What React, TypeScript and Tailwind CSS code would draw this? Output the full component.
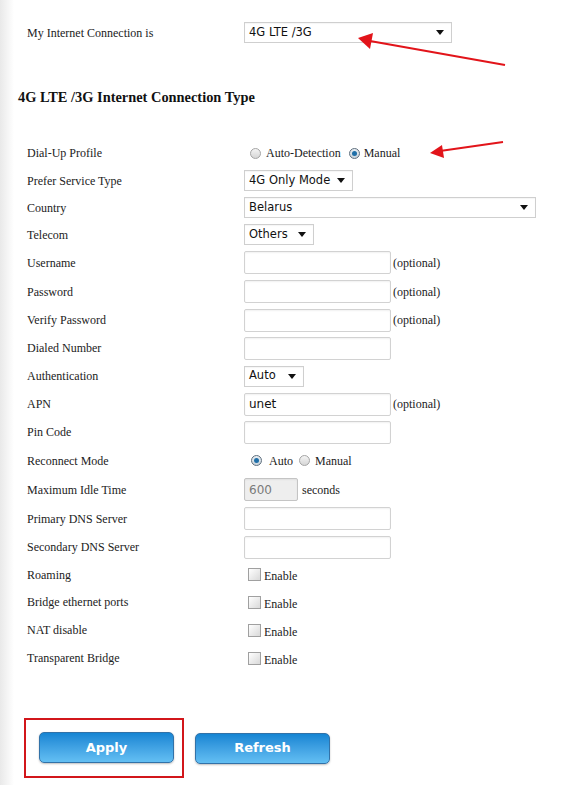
import React from "react";

const serif = { fontFamily: '"Liberation Serif", "Times New Roman", serif' };
const sans = { fontFamily: '"DejaVu Sans", Verdana, sans-serif' };

function Caret() {
  return (
    <svg width="8" height="5" viewBox="0 0 8 5" className="shrink-0">
      <path d="M0 0 L8 0 L4 5 Z" fill="#111" />
    </svg>
  );
}

function Select({ value, w }: { value: string; w: string }) {
  return (
    <div
      className={`${w} h-[21px] border border-[#cfcfcf] bg-white flex items-center justify-between pl-[4px] pr-[7px] text-[11.5px] text-[#111] shadow-[inset_0_1px_1px_rgba(0,0,0,0.04)]`}
      style={sans}
    >
      <span>{value}</span>
      <Caret />
    </div>
  );
}

function TextInput({ value = "", disabled = false, w = "w-[147px]" }: { value?: string; disabled?: boolean; w?: string }) {
  return (
    <div
      className={`${w} h-[23px] border rounded-[2px] flex items-center pl-[4px] text-[12px] ${
        disabled ? "bg-[#eeeeee] text-[#7a7a7a] border-[#c4c4c4]" : "bg-white text-[#111] border-[#d2d2d2]"
      } shadow-[inset_0_1px_2px_rgba(0,0,0,0.06)]`}
      style={sans}
    >
      {value}
    </div>
  );
}

function Radio({ checked }: { checked: boolean }) {
  return checked ? (
    <span className="w-[11px] h-[11px] rounded-full border border-[#5f6f7e] bg-gradient-to-b from-[#e8eef3] to-[#c9d3db] flex items-center justify-center shrink-0">
      <span className="block w-[5px] h-[5px] rounded-full bg-[#1f6fa8]" />
    </span>
  ) : (
    <span className="block w-[11px] h-[11px] rounded-full border border-[#a4a4a4] bg-gradient-to-b from-[#f4f4f4] to-[#d6d6d6] shrink-0" />
  );
}

function Check() {
  return (
    <span className="block w-[13px] h-[13px] border border-[#a0a0a0] bg-gradient-to-br from-[#ffffff] to-[#d9d9d9] shrink-0" />
  );
}

const Optional = () => (
  <span className="ml-[2px] text-[12px] text-[#222]" style={serif}>
    (optional)
  </span>
);

type Row = { label: string; control: React.ReactNode };

const heights = [
  "h-[28px]", "h-[27px]", "h-[27px]", "h-[27px]", "h-[29px]", "h-[29px]", "h-[28px]", "h-[28px]", "h-[28px]", "h-[28px]",
  "h-[28px]", "h-[29px]", "h-[29px]", "h-[29px]", "h-[28px]", "h-[27px]", "h-[28px]", "h-[28px]", "h-[28px]",
];

export default function App() {
  const rows: Row[] = [
    {
      label: "Dial-Up Profile",
      control: (
        <div className="flex items-center text-[12px] text-[#222] pl-[6px]" style={serif}>
          <Radio checked={false} />
          <span className="ml-[5px]">Auto-Detection</span>
          <span className="ml-[8px]"><Radio checked /></span>
          <span className="ml-[4px]">Manual</span>
        </div>
      ),
    },
    { label: "Prefer Service Type", control: <Select value="4G Only Mode" w="w-[109px]" /> },
    { label: "Country", control: <Select value="Belarus" w="w-[292px]" /> },
    { label: "Telecom", control: <Select value="Others" w="w-[70px]" /> },
    { label: "Username", control: <div className="flex items-center"><TextInput /><Optional /></div> },
    { label: "Password", control: <div className="flex items-center"><TextInput /><Optional /></div> },
    { label: "Verify Password", control: <div className="flex items-center"><TextInput /><Optional /></div> },
    { label: "Dialed Number", control: <TextInput /> },
    { label: "Authentication", control: <Select value="Auto" w="w-[60px]" /> },
    { label: "APN", control: <div className="flex items-center"><TextInput value="unet" /><Optional /></div> },
    { label: "Pin Code", control: <TextInput /> },
    {
      label: "Reconnect Mode",
      control: (
        <div className="flex items-center text-[12px] text-[#222] pl-[7px]" style={serif}>
          <Radio checked />
          <span className="ml-[7px]">Auto</span>
          <span className="ml-[6px]"><Radio checked={false} /></span>
          <span className="ml-[5px]">Manual</span>
        </div>
      ),
    },
    {
      label: "Maximum Idle Time",
      control: (
        <div className="flex items-center">
          <TextInput value="600" disabled w="w-[54px]" />
          <span className="ml-[4px] text-[12px] text-[#222]" style={serif}>seconds</span>
        </div>
      ),
    },
    { label: "Primary DNS Server", control: <TextInput /> },
    { label: "Secondary DNS Server", control: <TextInput /> },
    ...["Roaming", "Bridge ethernet ports", "NAT disable", "Transparent Bridge"].map((l) => ({
      label: l,
      control: (
        <div className="flex items-center pl-[4px] text-[12px] text-[#222]" style={serif}>
          <Check />
          <span className="ml-[3px] mt-[3px]">Enable</span>
        </div>
      ),
    })),
  ];

  return (
    <div className="relative w-[562px] h-[785px] bg-white flex overflow-hidden">
      <div className="w-[14px] bg-gradient-to-r from-[#e9e9e9] to-white shrink-0" />
      <div className="flex-1 flex flex-col">
        <div className="pt-[22px] pl-[13px] grid grid-cols-[217px_1fr] items-center h-[43px]">
          <div className="text-[12px] text-[#222]" style={serif}>My Internet Connection is</div>
          <Select value="4G LTE /3G" w="w-[208px]" />
        </div>
        <div className="mt-[46px] ml-[4px] text-[14.4px] font-bold text-[#111] leading-[16px]" style={serif}>
          4G LTE /3G Internet Connection Type
        </div>
        <div className="mt-[34px] flex flex-col pl-[13px]">
          {rows.map((r, i) => (
            <div key={r.label} className={`grid grid-cols-[217px_1fr] items-center ${heights[i]}`}>
              <div className="text-[12px] text-[#222]" style={serif}>{r.label}</div>
              <div>{r.control}</div>
            </div>
          ))}
        </div>
        <div className="mt-[46px] ml-[10px] flex items-center">
          <div className="w-[160px] h-[60px] border-2 border-[#d2161b] pl-[13px] pt-[12px]">
            <Button label="Apply" />
          </div>
          <div className="ml-[11px]">
            <Button label="Refresh" />
          </div>
        </div>
      </div>

      <svg className="absolute left-0 top-0 pointer-events-none" width="562" height="785">
        <line x1="505" y1="65" x2="370" y2="41" stroke="#e2141a" strokeWidth="2" />
        <polygon points="358,38 373,33 370,49" fill="#e2141a" />
        <line x1="503" y1="142" x2="440" y2="151" stroke="#e2141a" strokeWidth="2" />
        <polygon points="430,153 442,145 444,158" fill="#e2141a" />
      </svg>
    </div>
  );
}

function Button({ label }: { label: string }) {
  return (
    <div
      className="w-[135px] h-[31px] rounded-[5px] border border-[#3272a8] bg-gradient-to-b from-[#1485d3] to-[#63bff3] flex items-center justify-center text-white font-bold text-[13px] shadow-[0_1px_2px_rgba(0,0,0,0.25)]"
      style={sans}
    >
      {label}
    </div>
  );
}
